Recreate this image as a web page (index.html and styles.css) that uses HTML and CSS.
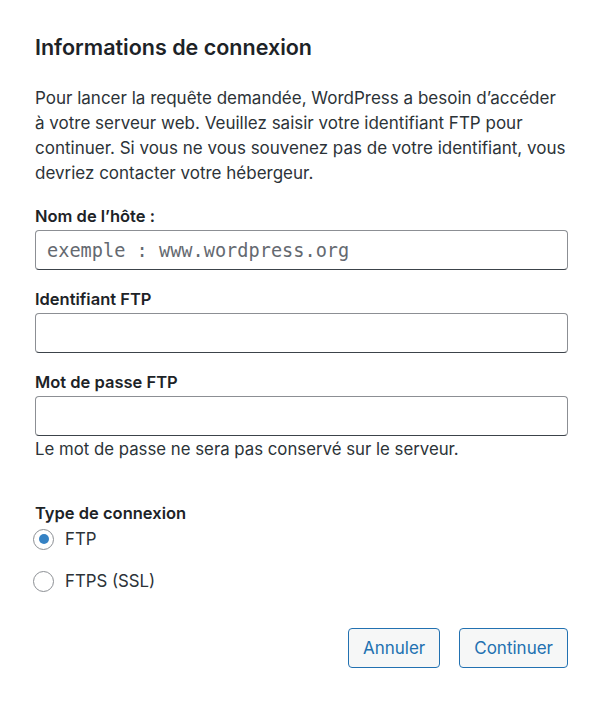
FILE: index.html
```html
<!DOCTYPE html>
<html lang="fr">
<head>
<meta charset="utf-8">
<title>Informations de connexion</title>
<link rel="stylesheet" href="styles.css">
</head>
<body>
<div class="dialog">
  <h2 class="title">Informations de connexion</h2>
  <p class="intro">Pour lancer la requête demandée, WordPress a besoin d’accéder à votre serveur web. Veuillez saisir votre identifiant FTP pour continuer. Si vous ne vous souvenez pas de votre identifiant, vous devriez contacter votre hébergeur.</p>

  <div class="field">
    <label class="label" for="host">Nom de l’hôte :</label>
    <input class="input" id="host" type="text" placeholder="exemple : www.wordpress.org">
  </div>
  <div class="field">
    <label class="label" for="user">Identifiant FTP</label>
    <input class="input" id="user" type="text">
  </div>
  <div class="field field-last">
    <label class="label" for="pass">Mot de passe FTP</label>
    <input class="input" id="pass" type="password">
    <p class="help">Le mot de passe ne sera pas conservé sur le serveur.</p>
  </div>

  <fieldset class="conn">
    <legend class="label">Type de connexion</legend>
    <label class="radio-row"><input class="radio" type="radio" name="ct" checked><span>FTP</span></label>
    <label class="radio-row"><input class="radio" type="radio" name="ct"><span>FTPS (SSL)</span></label>
  </fieldset>

  <div class="actions">
    <button class="btn" type="button">Annuler</button>
    <button class="btn" type="button">Continuer</button>
  </div>
</div>
</body>
</html>
```

FILE: styles.css
```css
html, body {
  margin: 0;
  padding: 0;
  background: #ffffff;
}
body {
  font-family: Inter, "Liberation Sans", Arial, sans-serif;
  color: #2c3338;
  font-size: 17px;
}
.dialog {
  width: 533px;
  padding: 34px 0 0 35px;
}
.title {
  margin: 0;
  font-size: 21.5px;
  line-height: 26px;
  font-weight: 600;
  color: #1d2327;
}
.intro {
  margin: 26px 0 18px;
  font-size: 17px;
  line-height: 25px;
  color: #2c3338;
}
.field {
  display: flex;
  flex-direction: column;
  margin-bottom: 17px;
}
.field-last {
  margin-bottom: 40px;
}
.label {
  font-size: 16.5px;
  line-height: 24px;
  font-weight: 600;
  color: #1d2327;
  margin-bottom: 2px;
  padding: 0;
}
.input {
  box-sizing: border-box;
  height: 40px;
  width: 533px;
  margin: 0;
  padding: 0 11px;
  border: 1px solid #8c8f94;
  border-bottom-color: #3c434a;
  border-radius: 4px;
  background: #fff;
  font-family: "DejaVu Sans Mono", "Liberation Mono", monospace;
  font-size: 18.6px;
  color: #2c3338;
  outline: none;
}
.input::placeholder {
  color: #646970;
}
.help {
  margin: 1px 0 0;
  font-size: 16.8px;
  line-height: 24px;
  color: #2c3338;
}
.conn {
  border: 0;
  margin: 0;
  padding: 0;
  display: flex;
  flex-direction: column;
}
.radio-row {
  display: flex;
  align-items: center;
  gap: 11px;
  height: 24px;
  margin-bottom: 18px;
  font-size: 16.8px;
  color: #2c3338;
}
.radio {
  appearance: none;
  -webkit-appearance: none;
  box-sizing: border-box;
  width: 21px;
  height: 21px;
  margin: 0 0 0 -2px;
  border: 1px solid #8c8f94;
  border-radius: 50%;
  background: #fff;
  display: flex;
  align-items: center;
  justify-content: center;
}
.radio:checked::before {
  content: "";
  width: 10px;
  height: 10px;
  border-radius: 50%;
  background: #3582c4;
}
.actions {
  display: flex;
  justify-content: flex-end;
  gap: 19px;
  margin-top: 17px;
}
.btn {
  box-sizing: border-box;
  height: 40px;
  padding: 0 14px;
  border: 1px solid #2271b1;
  border-radius: 4px;
  background: #f6f7f7;
  color: #2271b1;
  font-family: Inter, "Liberation Sans", Arial, sans-serif;
  font-size: 17px;
}
```
